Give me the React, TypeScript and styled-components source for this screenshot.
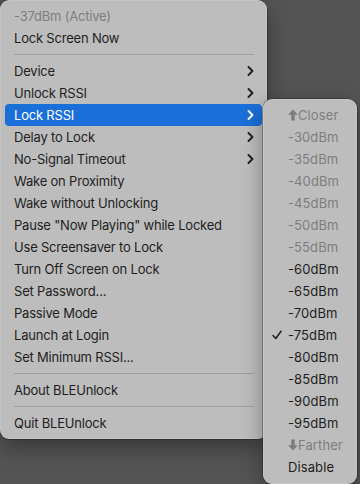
import styled, { createGlobalStyle } from "styled-components";

const GlobalStyle = createGlobalStyle`
  html, body {
    margin: 0;
    padding: 0;
    background: #545454;
    width: 360px;
    height: 484px;
    overflow: hidden;
  }
  body {
    font-family: Inter, "Noto Sans", "Liberation Sans", sans-serif;
    -webkit-font-smoothing: antialiased;
  }
`;

type Entry =
  | { kind: "item"; label: string; disabled?: boolean; sub?: boolean; active?: boolean }
  | { kind: "sep" };

const mainItems: Entry[] = [
  { kind: "item", label: "-37dBm (Active)", disabled: true },
  { kind: "item", label: "Lock Screen Now" },
  { kind: "sep" },
  { kind: "item", label: "Device", sub: true },
  { kind: "item", label: "Unlock RSSI", sub: true },
  { kind: "item", label: "Lock RSSI", sub: true, active: true },
  { kind: "item", label: "Delay to Lock", sub: true },
  { kind: "item", label: "No-Signal Timeout", sub: true },
  { kind: "item", label: "Wake on Proximity" },
  { kind: "item", label: "Wake without Unlocking" },
  { kind: "item", label: 'Pause "Now Playing" while Locked' },
  { kind: "item", label: "Use Screensaver to Lock" },
  { kind: "item", label: "Turn Off Screen on Lock" },
  { kind: "item", label: "Set Password..." },
  { kind: "item", label: "Passive Mode" },
  { kind: "item", label: "Launch at Login" },
  { kind: "item", label: "Set Minimum RSSI..." },
  { kind: "sep" },
  { kind: "item", label: "About BLEUnlock" },
  { kind: "sep" },
  { kind: "item", label: "Quit BLEUnlock" },
];

type SubEntry = { label: string; disabled?: boolean; checked?: boolean; arrow?: "up" | "down" };

const rssiItems: SubEntry[] = [
  { label: "Closer", disabled: true, arrow: "up" },
  ...[30, 35, 40, 45, 50, 55].map((v) => ({ label: `-${v}dBm`, disabled: true })),
  ...[60, 65, 70, 75, 80, 85, 90, 95].map((v) => ({ label: `-${v}dBm`, checked: v === 75 })),
  { label: "Farther", disabled: true, arrow: "down" },
  { label: "Disable" },
];

function Chevron({ light }: { light?: boolean }) {
  return (
    <svg width="7" height="10" viewBox="0 0 7 10">
      <polyline
        points="1.5,1 5.5,5 1.5,9"
        fill="none"
        stroke={light ? "#fff" : "#1e1e1e"}
        strokeWidth="1.8"
        strokeLinecap="round"
        strokeLinejoin="round"
      />
    </svg>
  );
}

function Check() {
  return (
    <svg width="10" height="10" viewBox="0 0 10 10">
      <polyline
        points="1,5.5 3.8,8.5 9,1.2"
        fill="none"
        stroke="#1e1e1e"
        strokeWidth="1.5"
        strokeLinecap="round"
        strokeLinejoin="round"
      />
    </svg>
  );
}

function BoldArrow({ dir }: { dir: "up" | "down" }) {
  return (
    <svg width="10" height="12" viewBox="0 0 10 12" style={{ transform: dir === "down" ? "rotate(180deg)" : undefined }}>
      <polygon points="5,0.5 9.8,5.8 6.7,5.8 6.7,11.5 3.3,11.5 3.3,5.8 0.2,5.8" fill="#7d7d7d" />
    </svg>
  );
}

export default function App() {
  return (
    <>
      <GlobalStyle />
      <Screen>
        <MainMenu>
          {mainItems.map((e, i) =>
            e.kind === "sep" ? (
              <Separator key={i} />
            ) : (
              <Row key={i} $active={e.active}>
                <Label $disabled={e.disabled} $active={e.active}>
                  {e.label}
                </Label>
                {e.sub && <Chevron light={e.active} />}
              </Row>
            )
          )}
        </MainMenu>
        <SubMenu>
          {rssiItems.map((e, i) => (
            <SubRow key={i}>
              <CheckSlot>{e.checked && <Check />}</CheckSlot>
              {e.arrow && <BoldArrow dir={e.arrow} />}
              <SubLabel $disabled={e.disabled}>{e.label}</SubLabel>
            </SubRow>
          ))}
        </SubMenu>
      </Screen>
    </>
  );
}

const Screen = styled.div`
  display: flex;
  align-items: flex-start;
  width: 360px;
  height: 484px;
`;

const MenuPanel = styled.div`
  display: flex;
  flex-direction: column;
  padding: 5px 0;
  background: #bdbdbd;
  border-radius: 9px;
  box-shadow: 0 0 0 0.5px rgba(255, 255, 255, 0.25) inset, 0 8px 22px rgba(0, 0, 0, 0.35),
    0 0 0 0.5px rgba(0, 0, 0, 0.5);
`;

const MainMenu = styled(MenuPanel)`
  width: 267px;
  flex-shrink: 0;
`;

const SubMenu = styled(MenuPanel)`
  position: relative;
  z-index: 2;
  width: 94px;
  margin-left: -4px;
  margin-top: 99px;
  padding-bottom: 6px;
`;

const Row = styled.div<{ $active?: boolean }>`
  height: 22px;
  margin: 0 5px;
  padding: 0 8px 0 9px;
  display: flex;
  align-items: center;
  justify-content: space-between;
  border-radius: 4px;
  background: ${(p) => (p.$active ? "#1a6fd8" : "transparent")};
`;

const Label = styled.span<{ $disabled?: boolean; $active?: boolean }>`
  font-size: 13px;
  line-height: 16px;
  letter-spacing: -0.2px;
  white-space: nowrap;
  color: ${(p) => (p.$active ? "#ffffff" : p.$disabled ? "#7d7d7d" : "#1e1e1e")};
`;

const SubLabel = styled(Label)`
  letter-spacing: 0.1px;
`;

const Separator = styled.div`
  height: 1px;
  margin: 5px 13px 5px 14px;
  background: #9e9e9e;
`;

const SubRow = styled.div`
  height: 22px;
  display: flex;
  align-items: center;
  padding-left: 9px;
`;

const CheckSlot = styled.span`
  width: 16px;
  display: flex;
  align-items: center;
`;
